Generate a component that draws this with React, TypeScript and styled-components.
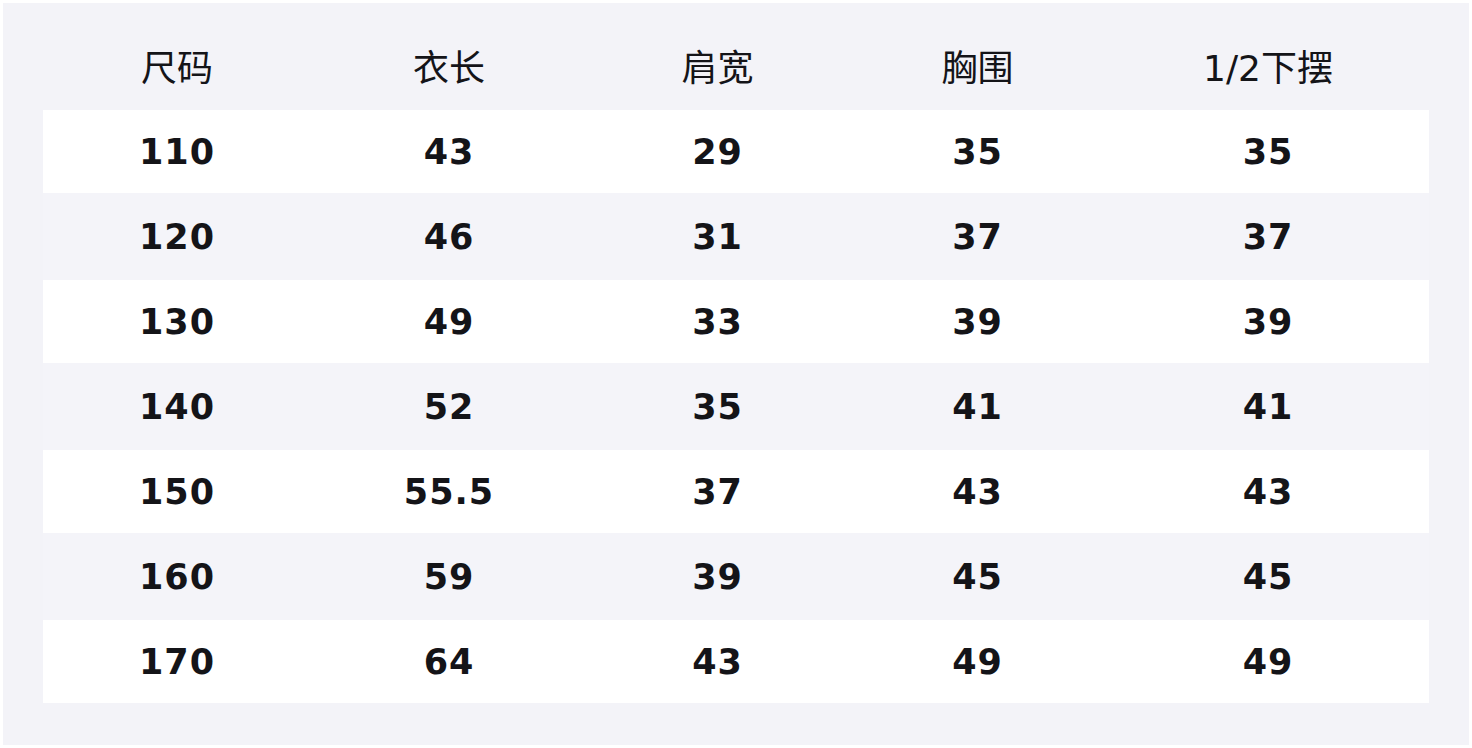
import React from "react";
import styled, { createGlobalStyle } from "styled-components";

const GlobalStyle = createGlobalStyle`
  html, body {
    margin: 0;
    padding: 0;
    background: #ffffff;
  }
  body {
    font-family: "DejaVu Sans", "Noto Sans CJK SC", sans-serif;
    color: #141418;
  }
`;

const Page = styled.div`
  width: 1472px;
  height: 748px;
  padding: 3px;
  box-sizing: border-box;
`;

const Panel = styled.div`
  width: 1466px;
  height: 742px;
  box-sizing: border-box;
  background: #f3f3f8;
  padding: 40px 40px 0;
`;

const Table = styled.div`
  display: grid;
  grid-template-columns: 268fr 276fr 261fr 259fr 322fr;
`;

const HeadCell = styled.div`
  height: 67px;
  display: flex;
  align-items: center;
  justify-content: center;
  font-size: 36px;
  font-weight: 400;
  padding-bottom: 24px;
  box-sizing: border-box;
`;

const Cell = styled.div<{ $odd: boolean }>`
  height: ${({ $odd }) => ($odd ? "83px" : "87px")};
  display: flex;
  align-items: center;
  justify-content: center;
  font-size: 35px;
  font-weight: 700;
  letter-spacing: 1px;
  background: ${({ $odd }) => ($odd ? "#ffffff" : "#f4f4f9")};
`;

const headers = ["尺码", "衣长", "肩宽", "胸围", "1/2下摆"];

const rows = [
  ["110", "43", "29", "35", "35"],
  ["120", "46", "31", "37", "37"],
  ["130", "49", "33", "39", "39"],
  ["140", "52", "35", "41", "41"],
  ["150", "55.5", "37", "43", "43"],
  ["160", "59", "39", "45", "45"],
  ["170", "64", "43", "49", "49"],
];

export default function App() {
  return (
    <>
      <GlobalStyle />
      <Page>
        <Panel>
          <Table>
            {headers.map((h) => (
              <HeadCell key={h}>{h}</HeadCell>
            ))}
            {rows.map((row, i) =>
              row.map((v, j) => (
                <Cell key={`${i}-${j}`} $odd={i % 2 === 0}>
                  {v}
                </Cell>
              ))
            )}
          </Table>
        </Panel>
      </Page>
    </>
  );
}
